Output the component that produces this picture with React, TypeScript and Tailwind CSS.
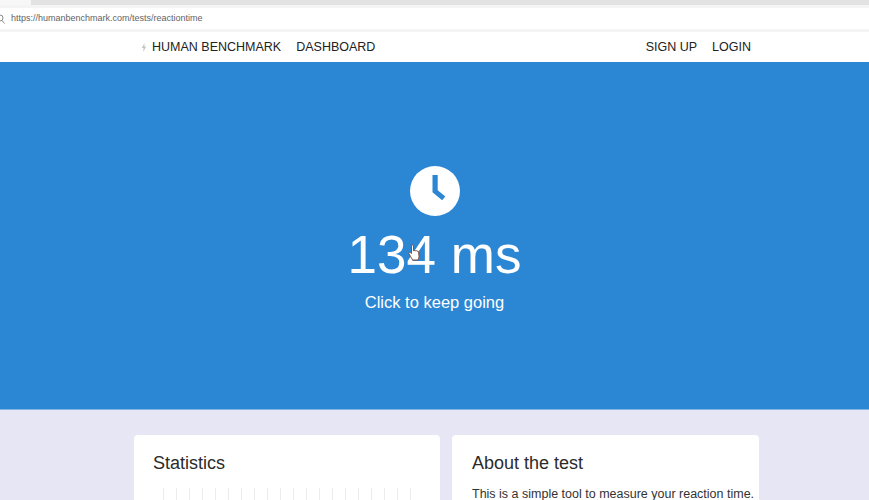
import React from 'react'

const sans = "font-['Liberation_Sans',Arial,sans-serif]"

const ticks = [0, 1, 2, 3, 4, 5, 6, 7, 8, 9, 10, 11, 12, 13, 14, 15, 16, 17, 18, 19]

const App: React.FC = () => {
    return (
        <div className={`${sans} w-[869px] h-[500px] overflow-hidden bg-[#e6e6f4]`}>
            {/* browser chrome */}
            <div className="flex h-[5px] bg-[#e2e2e2]">
                <div className="w-[31px] bg-[#f7f7f7]" />
            </div>
            <div className="h-[3px] bg-[#f4f4f4]" />
            <div className="h-[21px] bg-white flex items-center">
                <svg className="w-[5px] h-[10px] text-[#8a8a8a] shrink-0" viewBox="0 0 5 10" fill="none" stroke="currentColor" strokeWidth="1">
                    <circle cx="0" cy="4" r="3" />
                    <path d="M2 6.5 4.5 9.5" />
                </svg>
                <span className="ml-[6px] text-[9px] text-[#5f6368] leading-none">https://humanbenchmark.com/tests/reactiontime</span>
            </div>
            <div className="h-[3px] bg-[#f4f4f4]" />

            {/* nav */}
            <div className="h-[30px] bg-white flex items-center pl-[141px] pr-[118px] text-[12.5px] text-[#222]">
                <svg className="w-[6px] h-[9px] text-[#c4c4c4] mr-[5px]" viewBox="0 0 6 9" fill="currentColor">
                    <path d="M3.5 0 .8 5h1.8L2.2 9 5.2 3.6H3.3z" />
                </svg>
                <span>HUMAN BENCHMARK</span>
                <span className="ml-[15px]">DASHBOARD</span>
                <span className="ml-auto">SIGN UP</span>
                <span className="ml-[15px]">LOGIN</span>
            </div>

            {/* hero */}
            <div className="h-[348px] bg-[#2b86d3] flex flex-col items-center text-white pt-[104px] border-b border-[#7fb6e6]">
                <svg className="w-[50px] h-[50px]" viewBox="0 0 50 50">
                    <circle cx="25" cy="25" r="25" fill="#fff" />
                    <path d="M22.5 9h5.2v15.2l7.6 6.3-3.2 3.8-9.6-8z" fill="#2b86d3" />
                </svg>
                <div className="relative mt-[9px] text-[53px] leading-[60px]">
                    134 ms
                    <svg className="absolute left-[60px] top-[19px] w-[13px] h-[18px]" viewBox="0 0 13 18">
                        <path d="M3.5 1.8c0-1.2 2-1.2 2 0v5l.6-.3c.5-.3 1.3 0 1.5.3.6-.3 1.2-.1 1.5.3.6-.2 1.4.1 1.5.8l.4 4.2c.1 1.5-.6 2.7-1.2 3.9H4.6C3.6 14.200 2 11.500 1 9.700c-.4-.8.4-1.700 1.300-1.200l1.200 1z" fill="#fff" stroke="#8a4b3a" strokeWidth="1" />
                    </svg>
                </div>
                <div className="mt-[5px] text-[16.500px] leading-[24px]">Click to keep going</div>
            </div>

            {/* cards */}
            <div className="flex pl-[134px] pt-[25px] gap-[12px]">
                <div className="w-[306px] h-[100px] bg-white rounded-[4px] pl-[19px] pt-[16px]">
                    <h2 className="text-[18px] leading-[24px] text-[#2b2b2b]">Statistics</h2>
                    <div className="flex mt-[13px] gap-[12px] ml-[10px]">
                        {ticks.map(t => (
                            <div key={t} className="w-px h-[20px] bg-[#ececec]" />
                        ))}
                    </div>
                </div>
                <div className="w-[307px] h-[100px] bg-white rounded-[4px] pl-[20px] pt-[16px]">
                    <h2 className="text-[18px] leading-[24px] text-[#2b2b2b]">About the test</h2>
                    <p className="mt-[10px] text-[12.500px] leading-[18px] text-[#333]">This is a simple tool to measure your reaction time.</p>
                </div>
            </div>
        </div>
    )
}

export default App
